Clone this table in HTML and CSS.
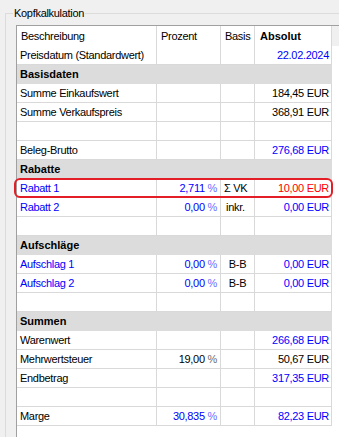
FILE: index.html
```html
<!DOCTYPE html>
<html lang="de">
<head>
<meta charset="utf-8">
<title>Kopfkalkulation</title>
<link rel="stylesheet" href="styles.css">
</head>
<body>
<div class="group">
  <div class="legend">Kopfkalkulation</div>
  <div class="grid">
    <div class="row head">
      <div class="c c1">Beschreibung</div>
      <div class="c c2">Prozent</div>
      <div class="c c3">Basis</div>
      <div class="c c4 bold">Absolut</div>
    </div>
    <div class="row">
      <div class="c c1">Preisdatum (Standardwert)</div>
      <div class="c c2"></div>
      <div class="c c3"></div>
      <div class="c c4 bl">22.02.2024</div>
    </div>
    <div class="row band"><div class="c">Basisdaten</div></div>
    <div class="row">
      <div class="c c1">Summe Einkaufswert</div>
      <div class="c c2"></div>
      <div class="c c3"></div>
      <div class="c c4">184,45 EUR</div>
    </div>
    <div class="row">
      <div class="c c1">Summe Verkaufspreis</div>
      <div class="c c2"></div>
      <div class="c c3"></div>
      <div class="c c4">368,91 EUR</div>
    </div>
    <div class="row">
      <div class="c c1"></div>
      <div class="c c2"></div>
      <div class="c c3"></div>
      <div class="c c4"></div>
    </div>
    <div class="row">
      <div class="c c1">Beleg-Brutto</div>
      <div class="c c2"></div>
      <div class="c c3"></div>
      <div class="c c4 bl">276,68 EUR</div>
    </div>
    <div class="row band"><div class="c">Rabatte</div></div>
    <div class="row hl">
      <div class="c c1 bl">Rabatt 1</div>
      <div class="c c2 bl">2,711 <span class="pc">%</span></div>
      <div class="c c3 b-sum">Σ VK</div>
      <div class="c c4 rd">10,00 EUR</div>
    </div>
    <div class="row">
      <div class="c c1 bl">Rabatt 2</div>
      <div class="c c2 bl">0,00 <span class="pc">%</span></div>
      <div class="c c3 b-inkr">inkr.</div>
      <div class="c c4 bl">0,00 EUR</div>
    </div>
    <div class="row">
      <div class="c c1"></div>
      <div class="c c2"></div>
      <div class="c c3"></div>
      <div class="c c4"></div>
    </div>
    <div class="row band"><div class="c">Aufschläge</div></div>
    <div class="row">
      <div class="c c1 bl">Aufschlag 1</div>
      <div class="c c2 bl">0,00 <span class="pc">%</span></div>
      <div class="c c3 b-bb">B-B</div>
      <div class="c c4 bl">0,00 EUR</div>
    </div>
    <div class="row">
      <div class="c c1 bl">Aufschlag 2</div>
      <div class="c c2 bl">0,00 <span class="pc">%</span></div>
      <div class="c c3 b-bb">B-B</div>
      <div class="c c4 bl">0,00 EUR</div>
    </div>
    <div class="row">
      <div class="c c1"></div>
      <div class="c c2"></div>
      <div class="c c3"></div>
      <div class="c c4"></div>
    </div>
    <div class="row band"><div class="c">Summen</div></div>
    <div class="row">
      <div class="c c1">Warenwert</div>
      <div class="c c2"></div>
      <div class="c c3"></div>
      <div class="c c4 bl">266,68 EUR</div>
    </div>
    <div class="row">
      <div class="c c1">Mehrwertsteuer</div>
      <div class="c c2">19,00 <span class="pc">%</span></div>
      <div class="c c3"></div>
      <div class="c c4">50,67 EUR</div>
    </div>
    <div class="row">
      <div class="c c1">Endbetrag</div>
      <div class="c c2"></div>
      <div class="c c3"></div>
      <div class="c c4 bl">317,35 EUR</div>
    </div>
    <div class="row">
      <div class="c c1"></div>
      <div class="c c2"></div>
      <div class="c c3"></div>
      <div class="c c4"></div>
    </div>
    <div class="row">
      <div class="c c1">Marge</div>
      <div class="c c2 bl">30,835 <span class="pc">%</span></div>
      <div class="c c3"></div>
      <div class="c c4 bl">82,23 EUR</div>
    </div>
  </div>
</div>
</body>
</html>
```
FILE: styles.css
```css
html, body {
  margin: 0;
  height: 100%;
  overflow: hidden;
}
body {
  background: #f0f0f0;
  font-family: "Liberation Sans", Arial, sans-serif;
  font-size: 11px;
  color: #000;
  letter-spacing: -0.3px;
}
.group {
  position: relative;
  margin: 13px 0 0 5px;
  border-left: 1px solid #dcdcdc;
  border-top: 1px solid #dcdcdc;
  padding: 11px 0 0 10px;
}
.legend {
  position: absolute;
  left: 7px;
  top: -8px;
  padding: 0 1px;
  background: #f0f0f0;
  line-height: 14px;
}
.grid {
  border-left: 1px solid #a0a0a0;
  border-top: 1px solid #a0a0a0;
  background: #fff;
  height: 430px;
}
.row {
  display: flex;
  width: 315px;
  height: 19px;
  box-sizing: border-box;
  border-bottom: 1px solid #d9d9d9;
  line-height: 18px;
}
.row.head {
  width: auto;
  height: 20px;
  border-bottom: 0;
  line-height: 20px;
  background: #f0f0f0;
}
.c {
  box-sizing: border-box;
  border-right: 1px solid #d9d9d9;
  padding: 0 3px;
  white-space: nowrap;
  overflow: hidden;
}
.c1 { width: 140px; }
.c2 { width: 64px; text-align: right; }
.c3 { width: 34px; }
.c4 { width: 77px; text-align: right; padding-right: 2px; }
.head .c {
  background: #fff;
  text-align: left;
  padding-left: 4px;
}
.head .c4 { padding-left: 5px; }
.bold { font-weight: bold; letter-spacing: 0; }
.band {
  background: #dcdcdc;
  font-weight: bold;
  letter-spacing: 0;
  border-bottom-color: #dcdcdc;
}
.band .c {
  width: 315px;
  border-right: 0;
}
.bl { color: #0000ff; }
.rd { color: #ff0000; }
.pc { opacity: 0.6; }
.b-sum { padding-left: 3px; }
.b-inkr { padding-left: 5px; }
.b-bb { text-align: center; padding: 0; }
.hl { position: relative; }
.hl::after {
  content: "";
  position: absolute;
  left: -3px;
  right: -1px;
  top: -1px;
  bottom: -1px;
  border: 2px solid #e41e26;
  border-radius: 6px;
  pointer-events: none;
}
```
